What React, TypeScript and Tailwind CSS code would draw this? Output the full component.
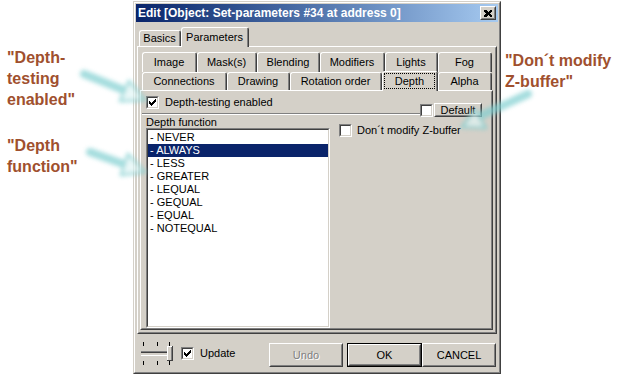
import type { ReactNode } from 'react';

const UI = "font-['Liberation_Sans',Arial,sans-serif] text-[11px] leading-none text-black";

function Check({ checked }: { checked?: boolean }) {
  return (
    <span className="flex w-[13px] h-[13px] shrink-0 border border-[#808080] border-r-white border-b-white">
      <span className="flex flex-1 items-center justify-center border border-[#404040] border-r-[#d4d0c8] border-b-[#d4d0c8] bg-white">
        {checked && (
          <svg width="7" height="7" viewBox="0 0 7 7" shapeRendering="crispEdges">
            <rect x="0" y="2" width="1" height="3" fill="#000" />
            <rect x="1" y="3" width="1" height="3" fill="#000" />
            <rect x="2" y="4" width="1" height="3" fill="#000" />
            <rect x="3" y="3" width="1" height="3" fill="#000" />
            <rect x="4" y="2" width="1" height="3" fill="#000" />
            <rect x="5" y="1" width="1" height="3" fill="#000" />
            <rect x="6" y="0" width="1" height="3" fill="#000" />
          </svg>
        )}
      </span>
    </span>
  );
}

function Raised({ children, className = '' }: { children: ReactNode; className?: string }) {
  return (
    <div className={`flex border border-white border-r-[#404040] border-b-[#404040] bg-[#d4d0c8] ${className}`}>
      <div className="flex flex-1 items-center justify-center border border-[#d4d0c8] border-r-[#808080] border-b-[#808080]">
        {children}
      </div>
    </div>
  );
}

function Tab({
  label,
  w,
  h = 'h-[18px]',
  selected,
  focus,
}: {
  label: string;
  w: string;
  h?: string;
  selected?: boolean;
  focus?: boolean;
}) {
  return (
    <div
      className={`flex shrink-0 ${w} ${h} rounded-t-[3px] border-t border-l border-white border-r border-r-[#404040] bg-[#d4d0c8] ${
        selected ? 'relative z-10 -mb-px' : ''
      }`}
    >
      <div className="flex flex-1 border-r border-[#808080]">
        {focus ? (
          <div className="m-px mb-[2px] flex flex-1 items-center justify-center border border-dotted border-black">
            {label}
          </div>
        ) : (
          <div className="flex flex-1 items-center justify-center pb-px">{label}</div>
        )}
      </div>
    </div>
  );
}

const ITEMS = ['NEVER', 'ALWAYS', 'LESS', 'GREATER', 'LEQUAL', 'GEQUAL', 'EQUAL', 'NOTEQUAL'];

function Note({ lines, className = '' }: { lines: string[]; className?: string }) {
  return (
    <div className={`font-['Liberation_Sans',Arial,sans-serif] text-[16px] font-bold leading-[21px] text-[#a0502e] ${className}`}>
      {lines.map((l) => (
        <div key={l}>{l}</div>
      ))}
    </div>
  );
}

export default function App() {
  return (
    <div className="relative flex w-[623px] h-[379px] overflow-hidden bg-white">
      {/* Left notes */}
      <div className="w-[133px] shrink-0 pl-[7px] pt-[47px]">
        <Note lines={['"Depth-', 'testing', 'enabled"']} />
        <Note lines={['"Depth', 'function"']} className="mt-[25px]" />
      </div>

      {/* Dialog */}
      <div className={`${UI} mt-px flex w-[368px] h-[373px] shrink-0 border border-[#d4d0c8] border-r-[#404040] border-b-[#404040]`}>
        <div className="flex flex-1 flex-col border border-white border-r-[#808080] border-b-[#808080] bg-[#d4d0c8] p-px">
          {/* Title bar */}
          <div className="flex h-[18px] items-center justify-between bg-linear-to-r from-[#0a246a] to-[#a6caf0] pl-[2px] pr-[2px]">
            <span className="text-[12px] font-bold text-white">Edit [Object: Set-parameters #34 at address 0]</span>
            <Raised className="w-[16px] h-[14px]">
              <svg width="8" height="7" viewBox="0 0 8 7" shapeRendering="crispEdges">
                <path d="M0 0h2l2 2 2-2h2v1L6 3.5 8 6v1H6L4 5 2 7H0V6l2-2.5L0 1z" fill="#000" />
              </svg>
            </Raised>
          </div>

          {/* Outer tabs */}
          <div className="mt-[4px] flex h-[20px] items-end pl-[3px]">
            <Tab label="Basics" w="w-[42px]" h="h-[16px]" />
            <Tab label="Parameters" w="w-[68px]" h="h-[20px]" selected />
          </div>

          {/* Outer panel */}
          <div className="ml-px mr-px flex h-[288px] flex-col border border-white border-r-[#404040] border-b-[#404040]">
            <div className="flex flex-1 flex-col border border-[#d4d0c8] border-r-[#808080] border-b-[#808080] pl-px pr-[2px] pt-[4px]">
              {/* Inner tab rows */}
              <div className="flex pl-[2px]">
                <Tab label="Image" w="w-[55px]" h="h-[20px]" />
                <Tab label="Mask(s)" w="w-[60px]" h="h-[20px]" />
                <Tab label="Blending" w="w-[63px]" h="h-[20px]" />
                <Tab label="Modifiers" w="w-[65px]" h="h-[20px]" />
                <Tab label="Lights" w="w-[53px]" h="h-[20px]" />
                <Tab label="Fog" w="w-[54px]" h="h-[20px]" />
              </div>
              <div className="flex h-[18px] items-end pl-[2px]">
                <Tab label="Connections" w="w-[85px]" />
                <Tab label="Drawing" w="w-[63px]" />
                <Tab label="Rotation order" w="w-[92px]" />
                <Tab label="Depth" w="w-[56px]" h="h-[20px]" selected focus />
                <Tab label="Alpha" w="w-[54px]" />
              </div>

              {/* Inner panel */}
              <div className="mb-[2px] flex flex-1 flex-col border border-white border-r-[#404040] border-b-[#404040]">
                <div className="flex flex-1 flex-col border border-[#d4d0c8] border-r-[#808080] border-b-[#808080]">
                  <div className="flex items-end">
                    <div className="flex flex-1 flex-col pt-[4px]">
                      <div className="flex items-center gap-[6px] pl-[4px]">
                        <Check checked />
                        <span>Depth-testing enabled</span>
                      </div>
                      <div className="mt-[4px] h-[2px] border-t border-[#808080] border-b border-b-white" />
                    </div>
                    <div className="-mb-[2px] flex items-center gap-px pr-[9px]">
                      <Check />
                      <Raised className="w-[48px] h-[14px]">
                        <span>Default</span>
                      </Raised>
                    </div>
                  </div>

                  <div className="flex flex-1 pt-px">
                    <div className="flex w-[188px] flex-col pl-[4px]">
                      <span className="h-[12px] pt-px">Depth function</span>
                      <div className="flex flex-1 flex-col border border-[#808080] border-r-white border-b-white">
                        <div className="flex flex-1 flex-col border border-[#404040] border-r-[#d4d0c8] border-b-[#d4d0c8] bg-white">
                          {ITEMS.map((it, i) => (
                            <div
                              key={it}
                              className={`flex h-[13px] items-center pl-[2px] ${i === 0 ? 'mt-px' : ''} ${
                                it === 'ALWAYS' ? 'bg-[#0a246a] text-white' : ''
                              }`}
                            >
                              - {it}
                            </div>
                          ))}
                        </div>
                      </div>
                    </div>
                    <div className="ml-[9px] mt-[8px] flex h-[13px] items-center gap-[5px]">
                      <Check />
                      <span>Don´t modify Z-buffer</span>
                    </div>
                  </div>
                </div>
              </div>
            </div>
          </div>

          {/* Bottom bar */}
          <div className="flex flex-1 items-start pl-[5px]">
            <svg className="mt-[8px]" width="34" height="24" viewBox="0 0 34 24" shapeRendering="crispEdges">
              <rect x="2" y="0" width="1" height="4" fill="#000" />
              <rect x="16" y="0" width="1" height="4" fill="#000" />
              <rect x="28" y="0" width="1" height="4" fill="#000" />
              <rect x="2" y="19" width="1" height="4" fill="#000" />
              <rect x="16" y="19" width="1" height="4" fill="#000" />
              <rect x="28" y="19" width="1" height="4" fill="#000" />
              <rect x="0" y="9" width="28" height="1" fill="#808080" />
              <rect x="0" y="10" width="28" height="1" fill="#404040" />
              <rect x="0" y="13" width="28" height="1" fill="#fff" />
              <rect x="27" y="9" width="1" height="5" fill="#fff" />
              <rect x="26" y="4" width="5" height="14" fill="#d4d0c8" />
              <rect x="26" y="4" width="5" height="1" fill="#fff" />
              <rect x="26" y="4" width="1" height="14" fill="#fff" />
              <rect x="31" y="4" width="1" height="15" fill="#404040" />
              <rect x="26" y="18" width="6" height="1" fill="#404040" />
              <rect x="30" y="5" width="1" height="13" fill="#808080" />
            </svg>
            <div className="ml-[6px] mt-[13px] flex items-center gap-[6px]">
              <Check checked />
              <span>Update</span>
            </div>
            <div className="ml-auto mr-[2px] mt-[9px] flex">
              <Raised className="w-[74px] h-[24px]">
                <span className="text-[#808080] [text-shadow:1px_1px_0_#fff]">Undo</span>
              </Raised>
              <div className="ml-[4px] flex w-[75px] h-[24px] border border-black">
                <Raised className="flex-1">
                  <span>OK</span>
                </Raised>
              </div>
              <Raised className="w-[74px] h-[24px]">
                <span>CANCEL</span>
              </Raised>
            </div>
          </div>
        </div>
      </div>

      {/* Right note */}
      <div className="pl-[4px] pt-[50px]">
        <Note lines={['"Don´t modify', 'Z-buffer"']} className="whitespace-nowrap" />
      </div>

      {/* Pointer arrows */}
      <svg className="pointer-events-none absolute inset-0" width="623" height="379" viewBox="0 0 623 379">
        <defs>
          <filter id="soft" x="-30%" y="-30%" width="160%" height="160%">
            <feGaussianBlur stdDeviation="2.2" />
          </filter>
        </defs>
        <g filter="url(#soft)" opacity="0.7">
          <line x1="84" y1="74" x2="126" y2="91" stroke="#7fcfd0" strokeWidth="8" strokeLinecap="round" />
          <polygon points="145,100 129,81 120,101" fill="#e2f6f6" stroke="#7fcfd0" strokeWidth="3" strokeLinejoin="round" />
          <line x1="90" y1="152" x2="126" y2="165" stroke="#7fcfd0" strokeWidth="8" strokeLinecap="round" />
          <polygon points="145,172 128,154 121,175" fill="#e2f6f6" stroke="#7fcfd0" strokeWidth="3" strokeLinejoin="round" />
          <line x1="528" y1="94" x2="480" y2="116" stroke="#7fcfd0" strokeWidth="8" strokeLinecap="round" />
          <polygon points="462,127 475,110 486,128" fill="#e2f6f6" stroke="#7fcfd0" strokeWidth="3" strokeLinejoin="round" />
        </g>
      </svg>
    </div>
  );
}
